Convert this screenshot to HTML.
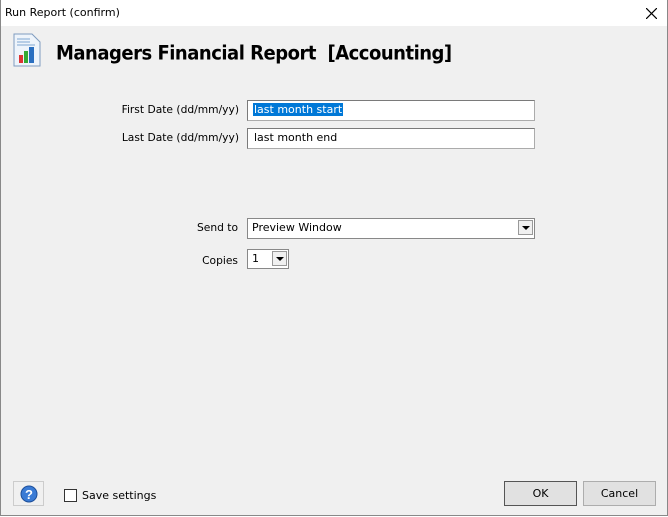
<!DOCTYPE html>
<html><head><style>
body{margin:0;width:668px;height:517px;overflow:hidden;font-family:"DejaVu Sans","Liberation Sans",sans-serif;font-size:11px;color:#000;}
.win{position:absolute;left:0;top:0;width:666px;height:515px;background:#f0f0f0;border:1px solid #888;border-top:none;}
.tb{position:absolute;left:0;top:0;width:666px;height:26px;background:#fff;}
.abs{position:absolute;}
.inp{position:absolute;background:#fff;border:1px solid #ababab;border-top-color:#7a7a7a;border-left-color:#7a7a7a;box-sizing:border-box;font-size:11px;line-height:18px;padding-left:6px;}
.lbl{position:absolute;text-align:right;width:200px;font-size:10.7px;}
.dd{position:absolute;width:15px;height:15px;top:1px;right:1px;background:#f0f0f0;border:1px solid #999;box-sizing:border-box;}
.dd:after{content:"";position:absolute;left:3px;top:5px;border-left:4px solid transparent;border-right:4px solid transparent;border-top:4px solid #000;}
.btn{position:absolute;background:#e1e1e1;border:1px solid #adadad;box-sizing:border-box;text-align:center;line-height:23px;font-size:11px;}
</style></head><body>
<div class="win">
<div class="tb"><span class="abs" style="left:4px;top:6px;font-size:11px;">Run Report (confirm)</span>
<svg class="abs" style="left:645px;top:8px" width="11" height="11"><path d="M0 0L11 11M11 0L0 11" stroke="#000" stroke-width="1.2"/></svg></div>
<svg class="abs" style="left:12px;top:33px" width="28" height="34">
<path d="M1 1H19L27 9V33H1Z" fill="#eef4fb" stroke="#7f9cbf"/>
<path d="M4 6H17M4 9H17M4 12H22" stroke="#7fa6d0"/>
<rect x="6" y="22" width="4" height="8" fill="#d33"/><rect x="11" y="18" width="4" height="12" fill="#3a3"/><rect x="16" y="14" width="5" height="16" fill="#2a6fc0"/>
</svg>
<div class="abs" style="left:55px;top:42px;font-family:'DejaVu Sans',sans-serif;font-weight:bold;font-size:18px;letter-spacing:-0.5px;white-space:pre;transform:scaleY(1.1);transform-origin:left top;">Managers Financial Report  [Accounting]</div>
<div class="lbl" style="left:38px;top:103px;">First Date (dd/mm/yy)</div>
<div class="inp" style="left:246px;top:100px;width:288px;height:21px;padding-left:5px"><span style="background:#0078d7;color:#fff;padding:0 1px">last month start</span></div>
<div class="lbl" style="left:38px;top:131px;">Last Date (dd/mm/yy)</div>
<div class="inp" style="left:246px;top:128px;width:288px;height:21px;">last month end</div>
<div class="lbl" style="left:37px;top:221px;">Send to</div>
<div class="inp" style="left:246px;top:218px;width:288px;height:21px;padding-left:4px;border:1px solid #888">Preview Window<div class="dd"></div></div>
<div class="lbl" style="left:37px;top:254px;">Copies</div>
<div class="inp" style="left:246px;top:249px;width:42px;height:20px;padding-left:4px;border:1px solid #888;line-height:17px">1<div class="dd"></div></div>
<div class="btn" style="left:12px;top:481px;width:31px;height:25px;background:#f0f0f0;border-color:#ccc">
<svg style="position:absolute;left:6px;top:3px" width="18" height="18"><circle cx="9" cy="9" r="8" fill="#3a7bd5" stroke="#1d4f9a"/><text x="9" y="14" text-anchor="middle" font-family="Liberation Sans" font-weight="bold" font-size="13" fill="#fff">?</text></svg></div>
<div class="abs" style="left:63px;top:489px;width:11px;height:11px;background:#fff;border:1px solid #333;"></div>
<div class="abs" style="left:81px;top:489px;">Save settings</div>
<div class="btn" style="left:503px;top:481px;width:73px;height:25px;border:1px solid #555">OK</div>
<div class="btn" style="left:582px;top:481px;width:73px;height:25px;">Cancel</div>
</div>
</body></html>
